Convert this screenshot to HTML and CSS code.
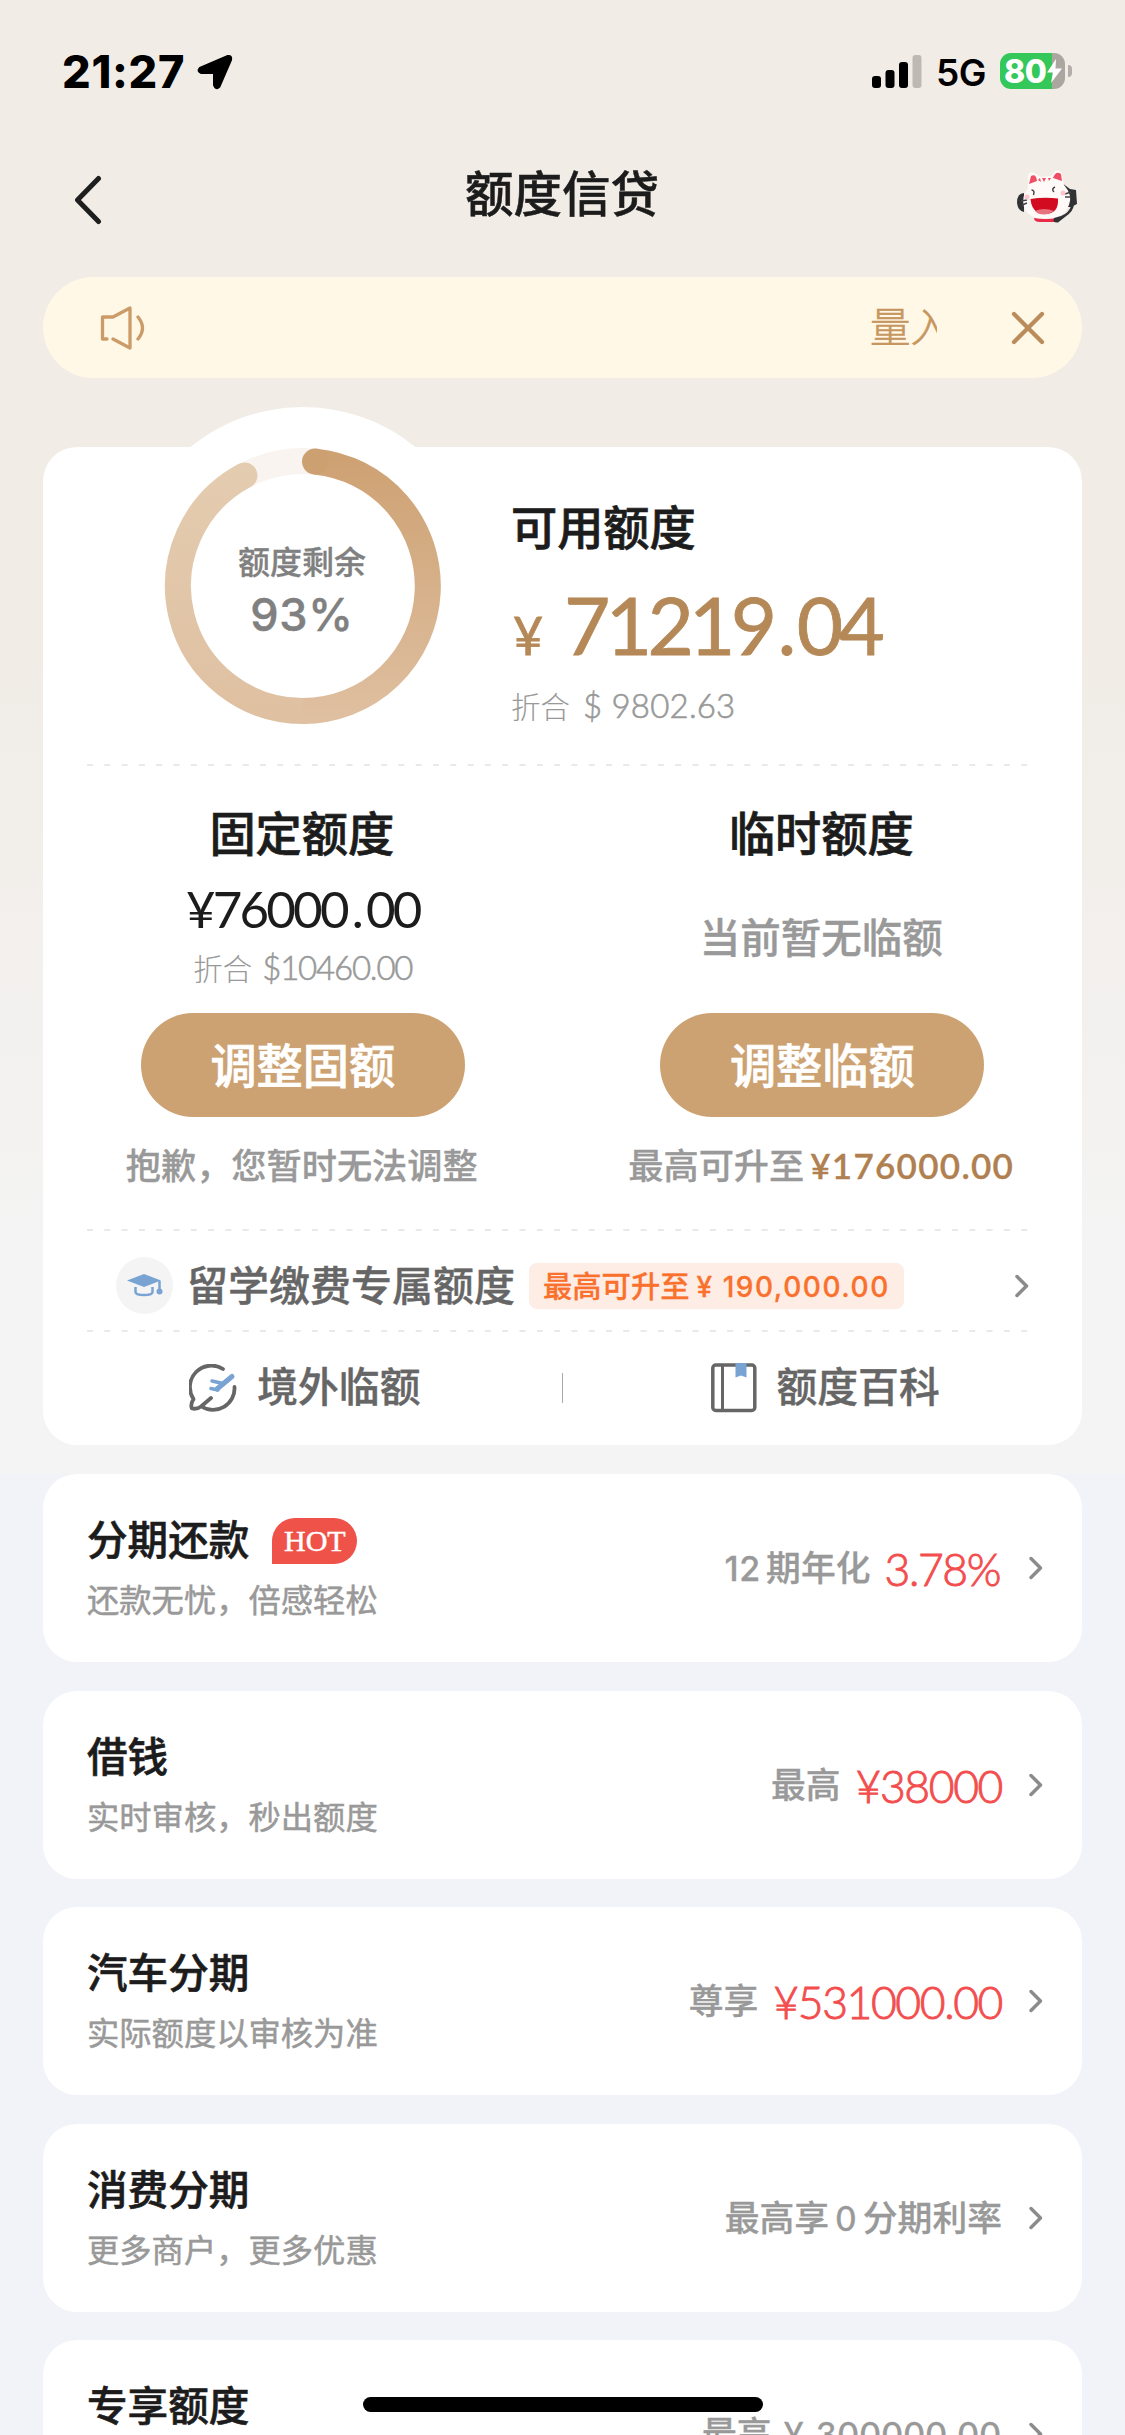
FILE: index.html
```html
<!DOCTYPE html>
<html lang="zh-CN">
<head>
<meta charset="utf-8">
<title>额度信贷</title>
<link rel="stylesheet" href="styles.css">
</head>
<body>
<div class="screen">
  <div class="status">
    <span class="clock">21:27</span>
    <svg class="locate" width="38" height="38" viewBox="0 0 38 38"><path d="M4 15.500 32 3.500Q35.500 3 34.500 7L23 33.500Q20 36.500 18.500 32V19.500H5.500Q1.500 18 4 15.500Z" stroke="#000" stroke-width="3" stroke-linejoin="round"/></svg>
    <svg class="signal" width="50" height="34" viewBox="0 0 50 34"><rect x="0" y="22" width="9" height="12" rx="3"/><rect x="13.500" y="16" width="9" height="18" rx="3"/><rect x="27" y="8" width="9" height="26" rx="3"/><rect x="40.500" y="1" width="9" height="33" rx="3" fill="#beb9b4"/></svg>
    <span class="net">5G</span>
    <div class="battery"><span>80</span><svg width="17" height="26" viewBox="0 0 17 26"><path d="M10 1 1 14.500h6L5 25 16 10.500H9.500Z" fill="#fff"/></svg></div>
    <i class="tip"></i>
  </div>

  <header class="nav">
    <svg width="30" height="50" viewBox="0 0 30 50" fill="none" stroke="#1e1e1e" stroke-width="5" stroke-linecap="round" stroke-linejoin="round"><path d="M25.500 3.500 4.500 25 25.500 46.500"/></svg>
    <h1>额度信贷</h1>
    <svg class="cat" width="62" height="54" viewBox="0 0 62 54">
      <path d="M46 14 54 20 60 21 61 35 55 38 48 38Z" fill="#303234"/>
      <path d="M8 24Q1 24 1 34 2 42 8 43Z" fill="#303234"/>
      <path d="M12 19 12 6Q14 2 18 4L25 8 35 7 39 2Q44 0 46 5L48 16Q57 26 53 36 47 50 31 50 12 50 8 38 5 28 12 19Z" fill="#fffaf8"/>
      <path d="M13 15 15 7Q20 4 21 12ZM37 9Q40 1 45 5L46 12ZM26 9 28 13 30 9ZM22 11 25 13 24 9ZM32 9 33 12 35 9Z" fill="#ef4e65"/>
      <path d="M14.500 30Q28 28 42 29.500 43 45 29 45 16 45 14.500 30Z" fill="#d30b20"/>
      <path d="M19 42Q28 38 38 42 33 45.500 28 45.500 22 45.500 19 42Z" fill="#e7717d"/>
      <path d="M18 49Q28 51 42 49L41 53H24Q18 53 18 49Z" fill="#e92b4a"/>
      <path d="M55 37Q53 44 45 47L38 49Q36 54 42 53.500L49 48Q58 42 58 35Z" fill="#303234"/>
      <path d="M15.500 21q3.500 0 2 5M39 18q-4 2-1 5M5 32l6-1M6 36l5-2M49 25l6-2M49 28h6" fill="none" stroke="#444" stroke-width="1.500"/>
      <circle cx="11" cy="28" r="2.500" fill="#ffc5cd"/><circle cx="47" cy="24" r="2.500" fill="#ffc5cd"/>
    </svg>
  </header>

  <div class="notice">
    <svg width="46" height="44" viewBox="0 0 46 44" fill="none" stroke="#cb9b68" stroke-width="3.300" stroke-linecap="round" stroke-linejoin="round"><path d="M7 33H2.500V11H13L30 2V42L13 33M38 11Q47 22 38 33"/></svg>
    <div class="marquee">量入</div>
    <svg width="34" height="34" viewBox="0 0 34 34" stroke="#ba8b5b" stroke-width="4.200" stroke-linecap="round"><path d="M3 3 31 31M31 3 3 31"/></svg>
  </div>

  <section class="quota">
    <div class="summary">
      <div class="gauge">
        <svg width="356" height="356" viewBox="0 0 356 356">
          <defs>
            <linearGradient id="r" x1="0" y1="40" x2="0" y2="316" gradientUnits="userSpaceOnUse"><stop offset="0" stop-color="#cda071"/><stop offset="1" stop-color="#dfc0a1"/></linearGradient>
            <linearGradient id="l" x1="0" y1="316" x2="0" y2="60" gradientUnits="userSpaceOnUse"><stop offset="0" stop-color="#dfc0a1"/><stop offset="1" stop-color="#e4ccb0"/></linearGradient>
          </defs>
          <circle cx="178" cy="178" r="178" fill="#fff"/>
          <g fill="none" stroke-width="26">
            <circle cx="178" cy="179" r="125" stroke="#f9f4f0"/>
            <path d="M178 304A125 125 0 0 1 119.500 68.500" stroke="url(#l)" stroke-linecap="round"/>
            <path d="M190 54.600A125 125 0 0 1 178 304" stroke="url(#r)"/>
            <path d="M190 54.600h.1" stroke="#cda071" stroke-linecap="round"/>
          </g>
        </svg>
        <div class="gauge-label"><span>额度剩余</span><b>93%</b></div>
      </div>
      <div class="available">
        <h2>可用额度</h2>
        <p class="amount"><i>¥</i><b>71219<u>.</u>04</b></p>
        <p class="convert wide">折合<span>$ 9802.63</span></p>
      </div>
    </div>
    <svg class="dash" width="943" height="2"><path d="M0 1H943"/></svg>
    <div class="columns">
      <div class="col">
        <h2>固定额度</h2>
        <p class="fixed">¥76000<u>.</u>00</p>
        <p class="convert">折合<span>$10460.00</span></p>
        <button>调整固额</button>
        <p class="hint">抱歉，您暂时无法调整</p>
      </div>
      <div class="col">
        <h2>临时额度</h2>
        <p class="none">当前暂无临额</p>
        <button>调整临额</button>
        <p class="hint">最高可升至<b>¥176000.00</b></p>
      </div>
    </div>
    <svg class="dash" width="943" height="2"><path d="M0 1H943"/></svg>
    <div class="study">
      <span class="cap"><svg width="38" height="26" viewBox="0 0 38 26"><path d="M1 7.500 18 1 35 7.500 18 14Z" fill="#78a3d2"/><path d="M9.500 14v5q0 3 8.500 3t8.500-3v-5" fill="none" stroke="#78a3d2" stroke-width="2.500"/><path d="M33.500 8v10" stroke="#78a3d2" stroke-width="2.500"/><circle cx="33.500" cy="18.500" r="3" fill="#78a3d2"/></svg></span>
      <span class="study-name">留学缴费专属额度</span>
      <span class="badge">最高可升至<b>¥ 190,000.00</b></span>
      <svg class="chev" width="16" height="24" viewBox="0 0 16 24"><path d="M3 2.500 12.500 12 3 21.500"/></svg>
    </div>
    <svg class="dash" width="943" height="2"><path d="M0 1H943"/></svg>
    <div class="links">
      <div class="link">
        <svg width="48" height="48" viewBox="0 0 48 48" fill="none" stroke="#666" stroke-width="3.800" stroke-linecap="round" stroke-linejoin="round"><path d="M34 5A21.500 21.500 0 0 0 4.500 35Q1 41 3 44.500 8 45.500 12 42.500L22 34M12.500 42.500A21.500 21.500 0 0 0 45.500 23"/><path d="M43 12.500 28 25" stroke="#78a3d2" stroke-width="5"/><path d="M34 19.500 23 17M29 26 22 24.500" stroke="#78a3d2" stroke-width="3.500"/></svg>
        <span>境外临额</span>
      </div>
      <i class="rule"></i>
      <div class="link">
        <svg width="46" height="50" viewBox="0 0 46 50"><rect x="1.800" y="2" width="42" height="45.500" rx="3" fill="none" stroke="#666" stroke-width="3.500"/><path d="M11.500 2v46" stroke="#666" stroke-width="3"/><path d="M24.500 0h11v14.500l-5.500-2-5.500 2Z" fill="#78a3d2"/></svg>
        <span>额度百科</span>
      </div>
    </div>
  </section>

  <main class="list">
    <article class="item">
      <div class="info"><h3>分期还款<em>HOT</em></h3><p>还款无忧，倍感轻松</p></div>
      <div class="offer"><span><b class="n12">12</b>期年化</span><strong class="rate">3.78%</strong></div>
      <svg class="chev" width="16" height="24" viewBox="0 0 16 24"><path d="M3 2.500 12.500 12 3 21.500"/></svg>
    </article>
    <article class="item">
      <div class="info"><h3>借钱</h3><p>实时审核，秒出额度</p></div>
      <div class="offer"><span>最高</span><strong>¥38000</strong></div>
      <svg class="chev" width="16" height="24" viewBox="0 0 16 24"><path d="M3 2.500 12.500 12 3 21.500"/></svg>
    </article>
    <article class="item">
      <div class="info"><h3>汽车分期</h3><p>实际额度以审核为准</p></div>
      <div class="offer"><span>尊享</span><strong>¥531000.00</strong></div>
      <svg class="chev" width="16" height="24" viewBox="0 0 16 24"><path d="M3 2.500 12.500 12 3 21.500"/></svg>
    </article>
    <article class="item">
      <div class="info"><h3>消费分期</h3><p>更多商户，更多优惠</p></div>
      <div class="offer plain"><span>最高享<b class="n0">0</b>分期利率</span></div>
      <svg class="chev" width="16" height="24" viewBox="0 0 16 24"><path d="M3 2.500 12.500 12 3 21.500"/></svg>
    </article>
    <article class="item">
      <div class="info"><h3>专享额度</h3></div>
      <div class="offer plain"><span>最高<b class="n300">¥ 300000.00</b></span></div>
      <svg class="chev" width="16" height="24" viewBox="0 0 16 24"><path d="M3 2.500 12.500 12 3 21.500"/></svg>
    </article>
  </main>
  <div class="home"></div>
</div>
</body>
</html>
```
FILE: styles.css
```css
* { box-sizing: border-box; margin: 0; padding: 0; }
svg { display: block; flex: none; }
i, em { font-style: normal; }
u { text-decoration: none; }
body { width: 1125px; height: 2435px; overflow: hidden; }

.screen {
  position: relative;
  width: 1125px;
  height: 2435px;
  overflow: hidden;
  color: #1c1c1c;
  font-family: "Noto Sans CJK SC", sans-serif;
  white-space: nowrap;
  background: linear-gradient(#f1ece6 0, #f1ece6 650px, #f4f4f4 1250px, #f4f4f4 1474px, #f2f3f8 1474px);
}

.status { display: flex; align-items: center; height: 142px; padding-left: 62px; font-family: Inter, sans-serif; color: #000; }
.clock { width: 134px; font-size: 45px; font-weight: 800; letter-spacing: 0.7px; }
.locate { margin-top: 2px; }
.signal { margin-left: 638px; }
.net { width: 64px; margin: 3px 0 0 14px; font-size: 37px; font-weight: 600; letter-spacing: -0.5px; }
.battery { display: flex; align-items: center; width: 65px; height: 36px; padding-left: 4px; border-radius: 11px; background: linear-gradient(90deg, #34c759 52px, #aca6a1 52px); color: #fff; font-size: 32px; font-weight: 800; letter-spacing: -0.5px; }
.tip { width: 4px; height: 12px; margin-left: 3px; border-radius: 0 5px 5px 0; background: #b3aea9; }

.nav { display: flex; justify-content: space-between; align-items: center; height: 116px; padding: 0 47px 0 73px; }
.nav h1 { margin: -19px 0 0 5px; font-size: 48.500px; font-weight: 500; line-height: 60px; -webkit-text-stroke: 0.5px; }
.nav .cat { margin-top: -9px; }

.notice { display: flex; align-items: center; width: 1039px; height: 101px; margin: 19px 43px 0; padding: 0 37px 0 57px; border-radius: 51px; background: #fff8e7; }
.marquee { width: 67px; margin: -6px 74px 0 724px; overflow: hidden; color: #c7965f; font-size: 40.500px; font-weight: 300; line-height: 56px; -webkit-text-stroke: 0.6px; }

.quota { width: 1039px; height: 998px; margin: 69px 43px 0; border-radius: 34px; background: #fff; }
.summary { display: flex; height: 317px; }
.gauge { position: relative; width: 356px; height: 356px; margin: -40px 0 0 82px; }
.gauge-label { position: absolute; inset: 0; display: flex; flex-direction: column; align-items: center; padding: 129px 2px 0 0; color: #808080; }
.gauge-label span { font-size: 32px; font-weight: 500; line-height: 48px; -webkit-text-stroke: 0.3px; }
.gauge-label b { margin-top: 3px; font: 500 45px/56px Inter, sans-serif; letter-spacing: 0.8px; -webkit-text-stroke: 0.5px; }
.available { padding: 46px 0 0 30px; }
h2 { font-size: 46.200px; font-weight: 500; line-height: 64px; -webkit-text-stroke: 0.7px; }
.amount { display: flex; align-items: baseline; height: 102px; margin-top: 16px; padding-left: 2px; color: #b58857; font-family: Lato, sans-serif; -webkit-text-stroke: 0.8px; }
.amount i { width: 51px; font-size: 52px; }
.amount b { font-size: 80px; font-weight: 400; letter-spacing: -4.700px; line-height: 102px; }
.amount u { margin: 0 5px 0 5px; }
.convert { color: #999; font-size: 29.500px; font-weight: 300; line-height: 44px; }
.convert span { margin-left: 10px; font: 300 33px/44px Lato, sans-serif; letter-spacing: -1.200px; -webkit-text-stroke: 0.6px; }
.wide { margin-top: 8px; }
.wide span { margin-left: 13px; letter-spacing: 0.200px; }

.dash { margin-left: 44px; }
.dash path { stroke: #e9e9e9; stroke-width: 2; stroke-dasharray: 6 11.300; }

.columns { display: flex; height: 463px; }
.col { display: flex; flex-direction: column; align-items: center; width: 519.500px; padding-top: 33px; }
.col h2 { margin-right: 2px; }
.fixed { margin-top: 14px; height: 64px; font: 400 51px/64px Lato, sans-serif; letter-spacing: -2.800px; }
.fixed u { margin: 0 5px; }
.col .convert { height: 44px; margin-top: 4px; }
.none { height: 64px; margin: 43px 2px 19px 0; color: #999; font-size: 40.500px; font-weight: 500; line-height: 60px; -webkit-text-stroke: 0.4px; }
button { width: 324px; height: 104px; margin-top: 24px; border: 0; border-radius: 52px; background: #cda272; color: #fff; font: 500 46.200px/98px "Noto Sans CJK SC", sans-serif; padding-bottom: 5px; -webkit-text-stroke: 0.7px; }
.hint { margin: 22px 2px 0 0; color: #999; font-size: 35.200px; font-weight: 500; line-height: 50px; -webkit-text-stroke: 0.3px; }
.hint b { margin-left: 6px; color: #b08050; font: 600 35px/50px Lato, sans-serif; letter-spacing: 1.300px; }

.study { display: flex; align-items: center; height: 99px; padding: 10px 52px 0 73px; }
.cap { display: flex; align-items: center; justify-content: center; width: 57px; height: 57px; border-radius: 50%; background: #f4f4f4; }
.study-name { width: 341px; margin: -5px 0 0 14px; color: #666; font-size: 41px; font-weight: 500; line-height: 60px; -webkit-text-stroke: 0.4px; }
.badge { width: 375px; height: 46px; margin-left: 1px; padding-left: 14px; border-radius: 8px; background: #feede5; color: #f9712c; font-size: 29.300px; font-weight: 500; line-height: 43px; -webkit-text-stroke: 0.3px; }
.badge b { margin-left: 7px; font: 500 28px/43px Inter, sans-serif; letter-spacing: 1.550px; }
.chev { margin-left: auto; fill: none; stroke: #8b8b8b; stroke-width: 3.500; stroke-linecap: round; stroke-linejoin: round; }

.links { display: flex; align-items: center; height: 111px; }
.link { display: flex; align-items: center; justify-content: center; gap: 20px; width: 519px; padding-left: 5px; color: #666; font-size: 40.800px; font-weight: 500; line-height: 60px; -webkit-text-stroke: 0.4px; }
.link span { margin-top: -5px; }
.rule { width: 1.500px; height: 30px; background: #aaa; }

.list { display: flex; flex-direction: column; gap: 28.500px; padding: 29px 43px 0; }
.item { display: flex; flex: none; height: 188px; padding: 0 38px 0 44px; border-radius: 34px; background: #fff; }
.info { padding-top: 34px; }
.info h3 { display: flex; align-items: center; height: 60px; font-size: 40.600px; font-weight: 500; line-height: 60px; -webkit-text-stroke: 0.6px; }
.info em { width: 85px; height: 46px; margin: 5px 0 0 23px; border-radius: 23px 23px 23px 0; background: #ee5249; color: #fff; font: 400 30px/46px "Liberation Serif", serif; text-align: center; -webkit-text-stroke: 0.5px; }
.info p { margin-top: 6px; color: #999; font-size: 32.300px; font-weight: 400; line-height: 48px; -webkit-text-stroke: 0.5px; }
.offer { display: flex; align-items: center; height: 190px; margin-left: auto; color: #999; font-size: 34.800px; font-weight: 500; }
.offer span { margin-top: -6px; -webkit-text-stroke: 0.3px; }
.offer strong { margin: 0 0 0 15px; color: #f34d4e; font: 300 44.500px/60px Lato, sans-serif; letter-spacing: -1.400px; -webkit-text-stroke: 0.9px; }
.offer .rate { margin: 0 2px 0 14px; }
.n12 { margin-right: 5px; font: 500 34px Inter, sans-serif; letter-spacing: 0.8px; }
.n0 { margin: 0 7px; font: 500 34px Lato, sans-serif; }
.n300 { margin-left: 12px; font: 500 35px Lato, sans-serif; letter-spacing: 1.700px; }
.item .chev { margin: 82px 0 0 26px; }
.home { position: absolute; left: 363px; top: 2397px; width: 400px; height: 15px; border-radius: 8px; background: #000; }
```
